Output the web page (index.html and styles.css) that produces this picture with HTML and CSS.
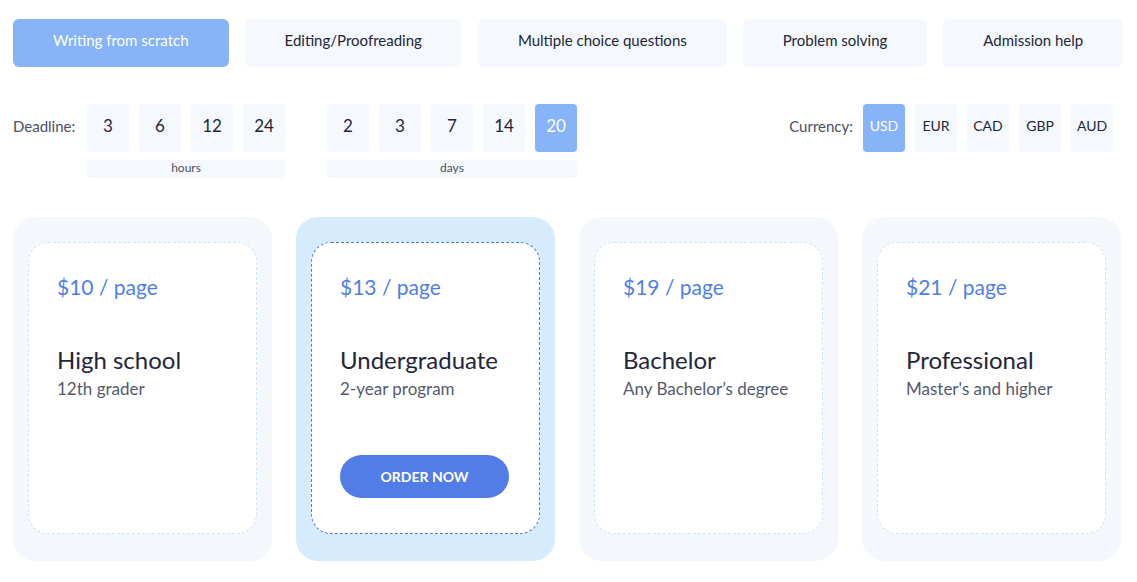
FILE: index.html
```html
<!DOCTYPE html>
<html lang="en">
<head>
    <meta charset="UTF-8">
    <meta name="viewport" content="width=device-width, initial-scale=1.0">
    <title>Prices</title>
    <link rel="stylesheet" href="styles.css">
</head>
<body>

  <div class="page">

    <div class="tabs">
      <a class="tab active">Writing from scratch</a>
      <a class="tab">Editing/Proofreading</a>
      <a class="tab">Multiple choice questions</a>
      <a class="tab">Problem solving</a>
      <a class="tab">Admission help</a>
    </div>

    <div class="options">
      <div class="deadline">
        <span class="label">Deadline:</span>
        <div class="group">
          <div class="boxes">
            <span class="box">3</span>
            <span class="box">6</span>
            <span class="box">12</span>
            <span class="box">24</span>
          </div>
          <div class="unit">hours</div>
        </div>
        <div class="group">
          <div class="boxes">
            <span class="box">2</span>
            <span class="box">3</span>
            <span class="box">7</span>
            <span class="box">14</span>
            <span class="box active">20</span>
          </div>
          <div class="unit">days</div>
        </div>
      </div>

      <div class="currency">
        <span class="label">Currency:</span>
        <div class="boxes">
          <span class="box small active">USD</span>
          <span class="box small">EUR</span>
          <span class="box small">CAD</span>
          <span class="box small">GBP</span>
          <span class="box small">AUD</span>
        </div>
      </div>
    </div>

    <div class="cards">
      <div class="card">
        <div class="card-inner">
          <div class="price">$10 / page</div>
          <div class="level">High school</div>
          <div class="desc">12th grader</div>
        </div>
      </div>
      <div class="card selected">
        <div class="card-inner">
          <div class="price">$13 / page</div>
          <div class="level">Undergraduate</div>
          <div class="desc">2-year program</div>
          <button class="order">ORDER NOW</button>
        </div>
      </div>
      <div class="card">
        <div class="card-inner">
          <div class="price">$19 / page</div>
          <div class="level">Bachelor</div>
          <div class="desc">Any Bachelor’s degree</div>
        </div>
      </div>
      <div class="card">
        <div class="card-inner">
          <div class="price">$21 / page</div>
          <div class="level">Professional</div>
          <div class="desc">Master's and higher</div>
        </div>
      </div>
    </div>

  </div>

</body>
</html>
```

FILE: styles.css
```css
body {
  margin: 0;
  background-color: #ffffff;
  font-family: "Lato", "Noto Sans", sans-serif;
  color: #22263a;
}

.page {
  padding: 19px 14px 0 13px;
}

/* service tabs */
.tabs {
  display: flex;
  gap: 16px;
}

.tab {
  height: 48px;
  box-sizing: border-box;
  padding: 0 40px 6px 40px;
  display: flex;
  align-items: center;
  justify-content: center;
  background-color: #f5f8fc;
  border-radius: 6px;
  font-size: 15px;
  color: #22263a;
  white-space: nowrap;
}

.tab.active {
  background-color: #87b3f8;
  color: #ffffff;
}

/* deadline + currency */
.options {
  display: flex;
  justify-content: space-between;
  margin-top: 37px;
  padding-right: 10px;
}

.deadline {
  display: flex;
  gap: 42px;
}

.deadline .label {
  margin-right: -33px;
  width: 65px;
}

.label {
  height: 48px;
  box-sizing: border-box;
  padding-bottom: 4px;
  display: flex;
  align-items: center;
  font-size: 15px;
  color: #4b5063;
  white-space: nowrap;
}

.group {
  display: flex;
  flex-direction: column;
  gap: 8px;
}

.boxes {
  display: flex;
  gap: 10px;
}

.box {
  width: 42px;
  height: 48px;
  box-sizing: border-box;
  padding-bottom: 5px;
  display: flex;
  align-items: center;
  justify-content: center;
  background-color: #f5f8fc;
  border-radius: 4px;
  font-size: 17px;
  color: #22263a;
}

.box.small {
  font-size: 14px;
}

.box.active {
  background-color: #87b3f8;
  color: #ffffff;
}

.unit {
  height: 18px;
  line-height: 16px;
  background-color: #f5f8fc;
  border-radius: 4px;
  text-align: center;
  font-size: 12px;
  color: #4b5063;
}

.currency {
  display: flex;
  gap: 10px;
}

/* price cards */
.cards {
  display: grid;
  grid-template-columns: repeat(4, 1fr);
  gap: 24px;
  margin-top: 39px;
  padding-right: 2px;
}

.card {
  background-color: #f4f8fc;
  border-radius: 22px;
  padding: 25px 15px 27px 15px;
}

.card.selected {
  background-color: #d6ebfb;
}

.card-inner {
  height: 292px;
  box-sizing: border-box;
  background-color: #ffffff;
  border: 1px dashed #cfe4f7;
  border-radius: 20px;
  padding: 31px 28px 0 28px;
}

.card.selected .card-inner {
  border-color: #4b79e0;
}

.price {
  font-size: 21px;
  line-height: 26px;
  color: #4f7fe6;
}

.level {
  margin-top: 45px;
  font-size: 24px;
  line-height: 30px;
  color: #22263a;
}

.desc {
  margin-top: 4px;
  font-size: 17px;
  line-height: 20px;
  color: #555a6c;
  white-space: nowrap;
}

.order {
  margin-top: 56px;
  width: 169px;
  height: 43px;
  border: 0;
  border-radius: 22px;
  background-color: #537de6;
  color: #ffffff;
  font-family: "Lato", sans-serif;
  font-size: 14px;
  font-weight: 700;
  cursor: pointer;
}
```
